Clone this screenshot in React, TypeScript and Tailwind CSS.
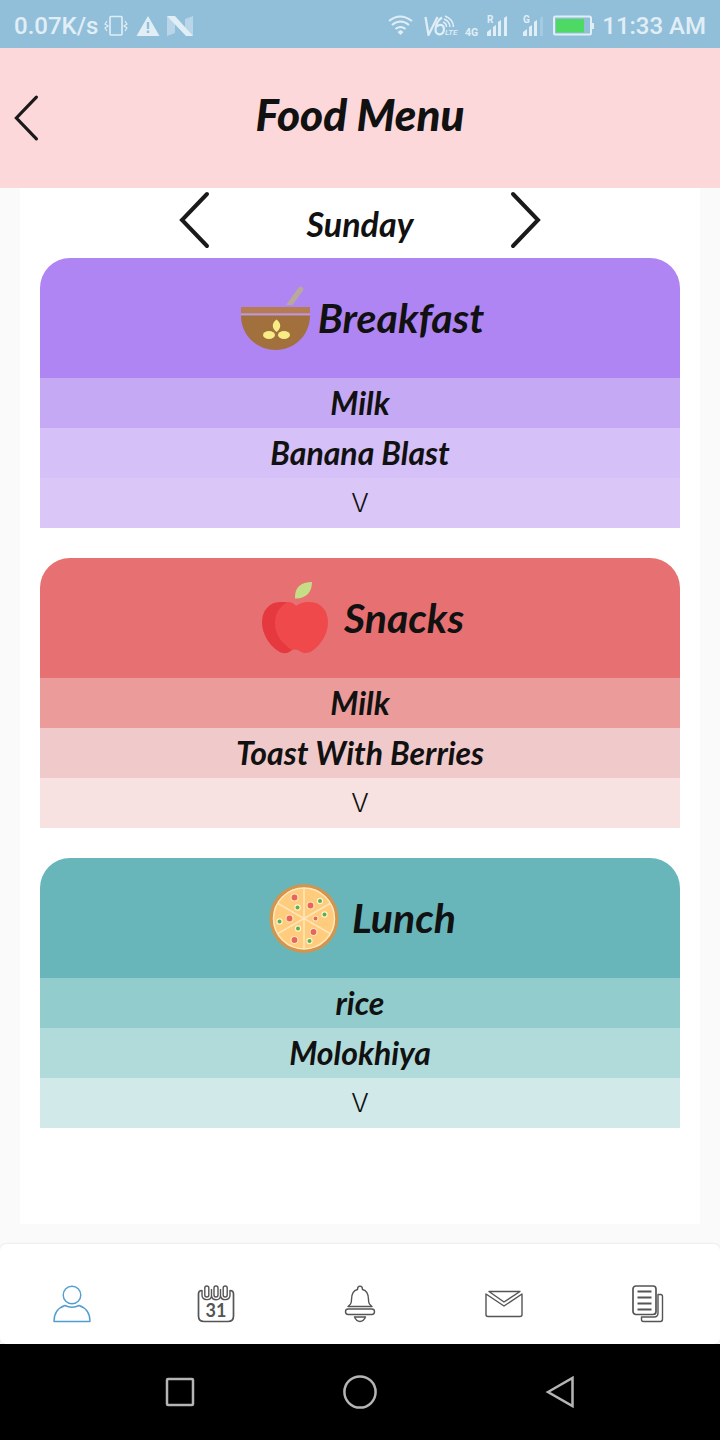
import type { ReactNode } from "react";

type Meal = {
  name: string;
  icon: ReactNode;
  gap: string;
  head: string;
  rows: [string, string, string];
  dishes: [string, string];
};

function BowlIcon() {
  return (
    <svg className="size-18" viewBox="0 3 72 72" aria-hidden="true">
      <path d="M46 26 58.500 8.800a2.600 2.600 0 0 1 4.300 3L52.500 26Z" fill="#b9a99b" />
      <path d="M1 28h69v6.500H1Z" fill="#b47c50" />
      <path d="M1 34.500h69v2H1Z" fill="#c19ad0" />
      <path d="M1 36.500h69C70 56 54.500 71 35.500 71S1 56 1 36.500Z" fill="#a1703d" />
      <g fill="#f8ed85">
        <path d="M36.500 40.500c5 4 5 8.500 0 12.500-5-4-5-8.500 0-12.500Z" />
        <ellipse cx="29" cy="56" rx="6" ry="4" />
        <ellipse cx="44" cy="56" rx="6" ry="4" />
      </g>
    </svg>
  );
}

function AppleIcon() {
  return (
    <svg className="size-18" viewBox="0 0 72 72" aria-hidden="true">
      <path
        d="M36 24C31 20 26 20 20 20 9 20 2 29 2 40c0 12 7 23 16 29 6 4 11 2 14-1l9-14-4-28Z"
        fill="#e5393f"
      />
      <path
        d="M36 24c5-4 10-4 14-4 11 0 18 9 18 20 0 12-7 23-16 29-7 4-11 1-14-1q-3-1-6 0c-9-6-17-14-17-27 0-10 5-17 13-21q5 0 8 4Z"
        fill="#ef494b"
      />
      <path d="M35 16.500C34.500 5 41 0 52 0c0 10-6 17-17 16.500Z" fill="#c6dd88" />
    </svg>
  );
}

const tomatoes = [
  [26.5, 15.5, 3.5], [42.5, 23.5, 3.5], [21.5, 36.5, 3.5], [47.5, 36.5, 2.5],
  [45.5, 50, 3.5], [26.5, 58, 3.5],
];
const herbs = [
  [52, 19], [56.5, 32.5], [29.5, 25.5], [11.5, 39.5], [30, 46.5], [41.5, 59],
];

function PizzaIcon() {
  return (
    <svg className="size-18" viewBox="0 0 72 72" aria-hidden="true">
      <circle cx="36" cy="36.500" r="34.500" fill="#d2954e" />
      <circle cx="36" cy="36.500" r="30.500" fill="#ffcb7c" stroke="#ffe9bf" strokeWidth="1.500" />
      <path
        d="M36 6v61M9.600 21.200l52.800 30.600M9.600 51.800l52.800-30.600"
        stroke="#ffe6b8"
        strokeWidth="1.600"
      />
      {tomatoes.map(([x, y, r]) => (
        <circle key={`${x}-${y}`} cx={x} cy={y} r={r} fill="#e8655a" stroke="#ffe3ba" strokeWidth="1.200" />
      ))}
      {herbs.map(([x, y]) => (
        <circle key={`${x}-${y}`} cx={x} cy={y} r="2.600" fill="#54b44b" stroke="#fff0cf" strokeWidth="1.200" />
      ))}
    </svg>
  );
}

const meals: Meal[] = [
  {
    name: "Breakfast",
    icon: <BowlIcon />,
    gap: "gap-1.5",
    head: "bg-[#ae85f3]",
    rows: ["bg-[#c6a9f5]", "bg-[#d5c0f7]", "bg-[#dac7f7]"],
    dishes: ["Milk", "Banana Blast"],
  },
  {
    name: "Snacks",
    icon: <AppleIcon />,
    gap: "gap-3",
    head: "bg-[#e77072]",
    rows: ["bg-[#ec9b9b]", "bg-[#f0caca]", "bg-[#f7e2e1]"],
    dishes: ["Milk", "Toast With Berries"],
  },
  {
    name: "Lunch",
    icon: <PizzaIcon />,
    gap: "gap-3",
    head: "bg-[#69b6ba]",
    rows: ["bg-[#93cccc]", "bg-[#b1dbda]", "bg-[#d2e9e9]"],
    dishes: ["rice", "Molokhiya"],
  },
];

function MealCard({ meal }: { meal: Meal }) {
  return (
    <section className="overflow-hidden rounded-t-[30px]">
      <div className={`flex h-30 items-center justify-center pl-1 ${meal.gap} ${meal.head}`}>
        {meal.icon}
        <h2 className="text-[41px] leading-12 font-bold italic">{meal.name}</h2>
      </div>
      <ul className="text-center text-[32px] leading-[50px] font-bold italic">
        {meal.dishes.map((dish, i) => (
          <li key={dish} className={`h-[50px] ${meal.rows[i]}`}>
            {dish}
          </li>
        ))}
      </ul>
      <button
        type="button"
        aria-label={`Show more for ${meal.name}`}
        className={`block h-[50px] w-full font-[Inter,sans-serif] text-[26px] leading-[50px] font-light ${meal.rows[2]}`}
      >
        V
      </button>
    </section>
  );
}

function StatusBar() {
  return (
    <div className="flex h-12 items-center justify-between bg-[#91bfda] px-3.5 pt-1 font-[Roboto,sans-serif] text-2xl font-medium text-[#e1eef6]">
      <div className="flex items-center gap-1.5">
        <span>0.07K/s</span>
        <svg className="h-6 w-[90px]" viewBox="0 0 90 24" fill="none" aria-hidden="true">
          <rect x="6" y="2.500" width="12" height="18.500" rx="1" stroke="currentColor" strokeWidth="1.600" />
          <path d="m3 7-2 3 3 2-3 2 2 3M21 7l2 3-3 2 3 2-2 3" stroke="currentColor" strokeWidth="1.200" />
          <path d="M44 2 55.500 22h-23Z" fill="currentColor" />
          <path d="M44 8v7m0 1.500v2.500" stroke="#91bfda" strokeWidth="2.400" />
          <path d="M63 2v20l8-3V8Zm26 0v20l-8-4V5Z" fill="currentColor" opacity=".5" />
          <path d="M63 2h8l18 20h-7Z" fill="currentColor" />
        </svg>
      </div>
      <div className="flex items-center gap-2">
        <svg className="h-6 w-[206px]" viewBox="0 0 206 24" fill="none" aria-hidden="true">
          <g stroke="currentColor" strokeWidth="2">
            <path d="M1 7q11-9 23 0M4 11q8.500-7 17 0M7.500 15q5-4 10 0" />
          </g>
          <path d="m9.500 18 3-2 3 2-3 3Z" fill="currentColor" />
          <g stroke="currentColor" strokeWidth="2.200" strokeLinejoin="round">
            <path d="M37.500 3 40.500 21 49.500 3" />
            <path d="M54 3.500q-6 4-6.500 12c0 7 8 6 8.500 0 0-5-4-6-7-3" />
          </g>
          <path d="M55 8q3.500 1.500 3.500 5M56 5q5.500 2 6 8M57 2q8 3 8.500 11" stroke="currentColor" strokeWidth="1.500" />
          <g fill="currentColor" fontFamily="Roboto, sans-serif">
            <text x="57" y="21" fontSize="8" fontStyle="italic">LTE</text>
            <text x="77" y="21.500" fontSize="10.500" fontWeight="700">4G</text>
            <text x="99" y="9" fontSize="10" fontWeight="700">R</text>
            <text x="135" y="9" fontSize="10" fontWeight="700">G</text>
            <path d="M99 18l4-3v7h-4Zm6-5 3-2v11h-3Zm5-5 3-2v16h-3Zm6-4 3-2v20h-3Z" />
            <path d="M135 18l4-3v7h-4Zm6-5 3-2v11h-3Zm5-5 3-2v16h-3Z" />
            <path d="M152 4l3-2v20h-3Z" opacity=".25" />
          </g>
          <rect x="166" y="2.500" width="37" height="18" rx="1.500" stroke="currentColor" strokeWidth="2" />
          <path d="M203 9h3v6h-3Z" fill="currentColor" />
          <path d="M168 5h28v13.500h-28Z" fill="#4cda64" />
        </svg>
        <span>11:33 AM</span>
      </div>
    </div>
  );
}

function Chevron({ flip = false, className }: { flip?: boolean; className: string }) {
  return (
    <svg className={className} viewBox="0 0 32 60" fill="none" aria-hidden="true">
      <path
        d={flip ? "M3 4 28 30 3 56" : "M29 4 4 30 29 56"}
        stroke="#1a1a1a"
        strokeWidth="4"
        strokeLinecap="round"
      />
    </svg>
  );
}

const tabs: { label: string; color: string; icon: ReactNode }[] = [
  {
    label: "Profile",
    color: "text-[#529dd0]",
    icon: (
      <>
        <circle cx="20" cy="11" r="8.800" />
        <path d="M2 37.500c0-9 5-14 11-16q7 3.500 14 0c6 2 11 7 11 16Z" />
      </>
    ),
  },
  {
    label: "Calendar",
    color: "text-[#555]",
    icon: (
      <>
        <path d="M6 6.500q-3.500 0-3.500 3.500v22q0 5.500 5.500 5.500h24q5.500 0 5.500-5.500V10q0-3.500-3.500-3.500" strokeWidth="1.700" />
        <rect x="8.800" y="2" width="4" height="11" rx="2" />
        <rect x="18" y="2" width="4" height="11" rx="2" />
        <rect x="27.200" y="2" width="4" height="11" rx="2" />
        <path d="M6 6v5c0 6 9 6 9.500 1V5M15.500 12c1 5 8.500 5 9 0V5M24.500 12c1 5 9.500 5 9.500-1V6" />
        <text x="20" y="32.500" textAnchor="middle" fontFamily="Lato, sans-serif" fontSize="18" fontWeight="700" fill="currentColor" stroke="none">
          31
        </text>
      </>
    ),
  },
  {
    label: "Notifications",
    color: "text-[#555]",
    icon: (
      <>
        <path d="M8 22.500c2.500-2 3.500-3 3.500-7 0-6 2-9 6-10 0-4.500 5-4.500 5 0 4 1 6 4 6 10 0 4 1 5 3.500 7Z" />
        <rect x="5.500" y="25" width="29" height="5.500" rx="2.700" />
        <path d="M14.500 33h11q-2 4.500-5.500 4.500T14.500 33Z" />
      </>
    ),
  },
  {
    label: "Messages",
    color: "text-[#555]",
    icon: (
      <>
        <path d="M2 10v20.500q0 2 2 2h32q2 0 2-2V10L20 22Z" />
        <path d="M5 7.500h31L20 18Z" />
      </>
    ),
  },
  {
    label: "Documents",
    color: "text-[#555]",
    icon: (
      <>
        <rect x="5" y="2" width="23" height="28.500" rx="3" strokeWidth="1.700" />
        <path d="M9.500 7.500h14m-14 6h14m-14 6h14m-14 6h14" strokeWidth="2.200" />
        <path d="M30 10.500h2.500q2 0 2 2V35q0 2.500-2 2.500h-17q-2 0-2-2v-2.500H26q4 0 4-4Z" />
      </>
    ),
  },
];

export default function App() {
  return (
    <div className="flex min-h-screen flex-col bg-[#fafafa] font-[Lato,sans-serif] text-[#111]">
      <StatusBar />
      <header className="grid h-35 grid-cols-[1fr_auto_1fr] items-center bg-[#fcd8db] px-3">
        <button type="button" aria-label="Back" className="justify-self-start">
          <Chevron className="h-12 w-7" />
        </button>
        <h1 className="pb-2 text-[44px] leading-14 font-black italic">Food Menu</h1>
      </header>

      <main className="mx-5 mb-5 flex-1 bg-white px-5">
        <div className="mx-auto flex h-[70px] w-[364px] items-start justify-between pt-0.5">
          <button type="button" aria-label="Previous day">
            <Chevron className="h-15 w-8" />
          </button>
          <p className="pt-2.5 text-[34px] leading-12 font-bold italic">Sunday</p>
          <button type="button" aria-label="Next day">
            <Chevron flip className="h-15 w-8" />
          </button>
        </div>
        <div className="flex flex-col gap-[30px]">
          {meals.map((meal) => (
            <MealCard key={meal.name} meal={meal} />
          ))}
        </div>
      </main>

      <nav aria-label="Main" className="flex h-25 items-center rounded-md bg-white pt-5 shadow-[0_0_2px_#00000026]">
        {tabs.map((tab) => (
          <a key={tab.label} href="#" aria-label={tab.label} className={`flex flex-1 justify-center ${tab.color}`}>
            <svg className="size-10" viewBox="0 0 40 40" fill="none" stroke="currentColor" strokeWidth="1.400" strokeLinejoin="round">
              {tab.icon}
            </svg>
          </a>
        ))}
      </nav>

      <div className="flex h-24 items-center justify-center bg-black text-[#b5b5b5]">
        <button type="button" aria-label="Recent apps" className="flex w-1/4 justify-center">
          <svg className="size-9" viewBox="0 0 36 36" fill="none" stroke="currentColor" strokeWidth="2.500">
            <rect x="5" y="5" width="26" height="26" rx="1" />
          </svg>
        </button>
        <button type="button" aria-label="Home" className="flex w-1/4 justify-center">
          <svg className="size-9" viewBox="0 0 36 36" fill="none" stroke="currentColor" strokeWidth="2.500">
            <circle cx="18" cy="18" r="15.600" />
          </svg>
        </button>
        <button type="button" aria-label="Back to previous app" className="flex w-1/4 justify-center pl-10">
          <svg className="size-9" viewBox="0 0 36 36" fill="none" stroke="currentColor" strokeWidth="2.500">
            <path d="M6 18 30.500 4v28Z" />
          </svg>
        </button>
      </div>
    </div>
  );
}
